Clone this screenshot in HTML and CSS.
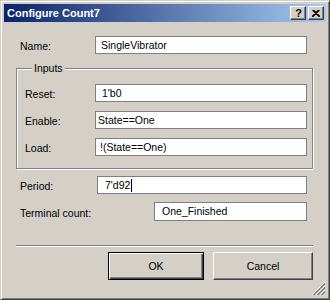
FILE: index.html
```html
<html>
  <head>
    <title>Configure Count7</title>
    <link rel="stylesheet" href="styles.css">
  </head>

  <body>
    <div class="window">
      <div class="titleBar">
        <span class="title">Configure Count7</span>
        <div class="captionButtons">
          <span class="captionButton help">?</span>
          <span class="captionButton close">
            <svg width="8" height="7" viewBox="0 0 8 7">
              <path d="M0.5 0 L7.5 7 M1.5 0 L8 6.5 M7.5 0 L0.5 7 M6.5 0 L0 6.5" stroke="#000" stroke-width="1.1" fill="none"/>
            </svg>
          </span>
        </div>
      </div>

      <div class="dialogBody">
        <div class="row nameRow">
          <span class="label nameLabel">Name:</span>
          <div class="textBox nameBox">SingleVibrator</div>
        </div>

        <fieldset class="group">
          <legend class="groupTitle">Inputs</legend>
          <div class="row groupRow">
            <span class="label groupLabel">Reset:</span>
            <div class="textBox resetBox">1'b0</div>
          </div>
          <div class="row groupRow">
            <span class="label groupLabel">Enable:</span>
            <div class="textBox enableBox">State==One</div>
          </div>
          <div class="row groupRow">
            <span class="label groupLabel">Load:</span>
            <div class="textBox loadBox">!(State==One)</div>
          </div>
        </fieldset>

        <div class="row periodRow">
          <span class="label periodLabel">Period:</span>
          <div class="textBox periodBox">7'd92<span class="caret"></span></div>
        </div>

        <div class="row terminalRow">
          <span class="label terminalLabel">Terminal count:</span>
          <div class="textBox terminalBox">One_Finished</div>
        </div>

        <div class="separator"></div>

        <div class="buttonRow">
          <button class="button defaultButton">OK</button>
          <button class="button">Cancel</button>
        </div>

        <div class="grip">
          <svg width="14" height="14" viewBox="0 0 14 14">
            <path d="M13 1 L1 13 M13 5 L5 13 M13 9 L9 13" stroke="#808080" stroke-width="1" fill="none"/>
            <path d="M13 2 L2 13 M13 6 L6 13 M13 10 L10 13" stroke="#808080" stroke-width="1" fill="none"/>
            <path d="M13 0 L0 13 M13 4 L4 13 M13 8 L8 13" stroke="#ffffff" stroke-width="1" fill="none"/>
          </svg>
        </div>
      </div>
    </div>
  </body>
</html>
```

FILE: styles.css
```css
body {
  margin: 0;
  background-color: #d4d0c8;
  font-family: "Liberation Sans", Arial, sans-serif;
  font-size: 10.5px;
  color: #000000;
}

.window {
  display: flex;
  flex-direction: column;
  box-sizing: border-box;
  width: 330px;
  height: 300px;
  padding: 3px;
  background-color: #d4d0c8;
  border: 1px solid;
  border-color: #d4d0c8 #404040 #404040 #d4d0c8;
  box-shadow: inset 1px 1px 0 #ffffff, inset -1px -1px 0 #808080;
}

.titleBar {
  display: flex;
  align-items: center;
  justify-content: space-between;
  height: 18px;
  padding-left: 3px;
  padding-right: 2px;
  background: linear-gradient(to right, #0a246a, #a6caf0);
}

.title {
  color: #ffffff;
  font-size: 11px;
  font-weight: bold;
  line-height: 18px;
}

.captionButtons {
  display: flex;
  gap: 1px;
}

.captionButton {
  display: flex;
  align-items: center;
  justify-content: center;
  box-sizing: border-box;
  width: 16px;
  height: 14px;
  background-color: #d4d0c8;
  border: 1px solid;
  border-color: #ffffff #404040 #404040 #ffffff;
  box-shadow: inset -1px -1px 0 #808080;
}

.help {
  font-size: 11px;
  font-weight: bold;
  line-height: 12px;
  padding-left: 1px;
}

.close {
  margin-left: 1px;
}

.dialogBody {
  display: flex;
  flex-direction: column;
  flex: 1;
  padding: 0 13px 0 12px;
}

.row {
  display: flex;
  align-items: center;
  height: 18px;
}

.nameRow,
.periodRow,
.terminalRow {
  padding-left: 4px;
  padding-right: 6px;
}

.nameRow {
  margin-top: 14px;
}

.label {
  flex-shrink: 0;
  padding-top: 2px;
}

.nameLabel {
  width: 75px;
}

.periodLabel {
  width: 77px;
}

.terminalLabel {
  width: 134px;
}

.groupLabel {
  width: 70px;
}

.textBox {
  flex: 1;
  box-sizing: border-box;
  height: 18px;
  line-height: 16px;
  padding-left: 5px;
  background-color: #ffffff;
  border: 1px solid #808080;
  white-space: nowrap;
}

.resetBox {
  padding-left: 6px;
}

.enableBox {
  padding-left: 2px;
}

.loadBox {
  padding-left: 4px;
}

.periodBox,
.terminalBox {
  padding-left: 7px;
}

.caret {
  display: inline-block;
  width: 1px;
  height: 13px;
  margin-left: 1px;
  vertical-align: -3px;
  background-color: #000000;
}

.group {
  box-sizing: border-box;
  width: 297px;
  margin: 8px 0 0 0;
  padding: 10px 5px 12px 8px;
  border: 1px solid #808080;
  box-shadow: 1px 1px 0 #ffffff, inset 1px 1px 0 #ffffff;
}

.groupTitle {
  margin-left: 7px;
  padding: 0 2px;
  line-height: 12px;
  background-color: #d4d0c8;
}

.groupRow {
  margin-bottom: 9px;
}

.groupRow:last-child {
  margin-bottom: 0;
}

.periodRow {
  margin-top: 7px;
}

.terminalRow {
  margin-top: 8px;
  height: 19px;
}

.terminalRow .textBox {
  height: 19px;
  line-height: 17px;
}

.separator {
  height: 1px;
  margin-top: 24px;
  background-color: #808080;
  box-shadow: 0 1px 0 #ffffff;
}

.buttonRow {
  display: flex;
  justify-content: flex-end;
  gap: 9px;
  margin-top: 6px;
}

.button {
  box-sizing: border-box;
  width: 100px;
  height: 28px;
  padding: 0;
  font-family: "Liberation Sans", Arial, sans-serif;
  font-size: 10.5px;
  color: #000000;
  background-color: #d4d0c8;
  border: 1px solid;
  border-color: #ffffff #404040 #404040 #ffffff;
  box-shadow: inset -1px -1px 0 #808080;
}

.defaultButton {
  width: 96px;
  border-color: #000000;
  box-shadow: inset 1px 1px 0 #ffffff, inset -1px -1px 0 #404040, inset -2px -2px 0 #808080;
}

.grip {
  display: flex;
  justify-content: flex-end;
  margin-top: auto;
  margin-right: -13px;
  height: 14px;
}
```
